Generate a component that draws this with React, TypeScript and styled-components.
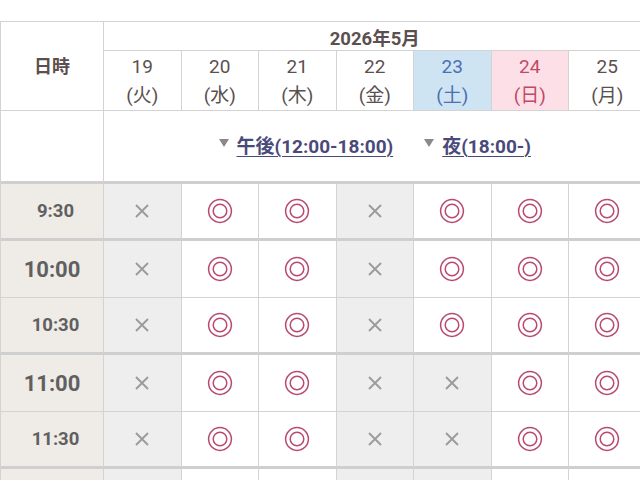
import React from 'react';
import styled, { createGlobalStyle } from 'styled-components';

const Global = createGlobalStyle`
  html, body { margin: 0; padding: 0; overflow: hidden; background: #fff; }
  body { font-family: Roboto, "Noto Sans CJK JP", sans-serif; }
`;

const BORDER = '#d3d3d3';

const Page = styled.div`
  padding-top: 21px;
  width: 640px;
  height: 480px;
  overflow: hidden;
`;

const Grid = styled.div`
  display: grid;
  grid-template-columns: 103px repeat(7, 77.5px);
  grid-template-rows: 29px 60px 73px repeat(6, 57px);
  width: max-content;
  border-top: 1px solid ${BORDER};
  border-left: 1px solid ${BORDER};
`;

const Cell = styled.div<{ $thick?: boolean }>`
  box-sizing: border-box;
  border-right: 1px solid ${BORDER};
  border-bottom: ${(p) => (p.$thick ? 3 : 1)}px solid ${(p) => (p.$thick ? '#cfcfcf' : BORDER)};
  display: flex;
  align-items: center;
  justify-content: center;
`;

const Corner = styled(Cell)`
  grid-row: span 2;
  font-size: 18px;
  font-weight: 700;
  color: #5b4f4f;
  padding-bottom: 2px;
`;

const Month = styled(Cell)`
  grid-column: span 7;
  font-size: 18.5px;
  font-weight: 700;
  color: #5b4f4f;
  padding-top: 1px;
`;

const DateCell = styled(Cell)<{ $kind?: 'sat' | 'sun' }>`
  flex-direction: column;
  font-size: 19px;
  line-height: 29px;
  background: ${(p) => (p.$kind === 'sat' ? '#cfe4f3' : p.$kind === 'sun' ? '#fde0e7' : '#fff')};
  color: ${(p) => (p.$kind === 'sat' ? '#4d6fb4' : p.$kind === 'sun' ? '#c04a66' : '#5b5050')};
`;

const Blank = styled(Cell)``;

const LinkBar = styled(Cell)`
  grid-column: span 7;
  gap: 31px;
  padding-bottom: 4px;
`;

const PeriodLink = styled.a`
  display: flex;
  align-items: center;
  gap: 8px;
  font-size: 19px;
  font-weight: 700;
  color: #4a4a7a;
  text-decoration: none;
`;

const LinkText = styled.span`
  text-decoration: underline;
  text-underline-offset: 3px;
  text-decoration-thickness: 1px;
`;

const Time = styled(Cell)<{ $major?: boolean }>`
  background: #efebe6;
  padding-left: ${(p) => (p.$major ? 0 : 7)}px;
  font-weight: 700;
  font-size: ${(p) => (p.$major ? 22 : 18.5)}px;
  color: #606060;
`;

const Slot = styled(Cell)<{ $ok: boolean }>`
  background: ${(p) => (p.$ok ? '#fff' : '#eeeeee')};
`;

const Tri = () => (
  <svg width="10" height="9" viewBox="0 0 10 9" style={{ marginTop: -2 }}>
    <polygon points="0,0 10,0 5,8" fill="#8e8787" />
  </svg>
);

const Maru = () => (
  <svg width="26" height="26" viewBox="0 0 26 26">
    <circle cx="13" cy="13" r="11.4" fill="none" stroke="#b9496e" strokeWidth="1.5" />
    <circle cx="13" cy="13" r="6.8" fill="none" stroke="#b9496e" strokeWidth="1.5" />
  </svg>
);

const Batsu = () => (
  <svg width="14" height="14" viewBox="0 0 14 14">
    <path d="M1 1 L13 13 M13 1 L1 13" stroke="#9b9b9b" strokeWidth="1.9" />
  </svg>
);

const dates: { d: number; w: string; kind?: 'sat' | 'sun' }[] = [
  { d: 19, w: '火' },
  { d: 20, w: '水' },
  { d: 21, w: '木' },
  { d: 22, w: '金' },
  { d: 23, w: '土', kind: 'sat' },
  { d: 24, w: '日', kind: 'sun' },
  { d: 25, w: '月' },
];

const rows = [
  { t: '9:30', major: false, thick: true, s: 'xooxooo' },
  { t: '10:00', major: true, thick: false, s: 'xooxooo' },
  { t: '10:30', major: false, thick: true, s: 'xooxooo' },
  { t: '11:00', major: true, thick: false, s: 'xooxxoo' },
  { t: '11:30', major: false, thick: true, s: 'xooxxoo' },
  { t: '', major: true, thick: false, s: 'xooxxoo' },
];

export default function App() {
  return (
    <>
      <Global />
      <Page>
        <Grid>
          <Corner>日時</Corner>
          <Month>2026年5月</Month>
          {dates.map((d) => (
            <DateCell key={d.d} $kind={d.kind}>
              <span>{d.d}</span>
              <span>({d.w})</span>
            </DateCell>
          ))}
          <Blank $thick />
          <LinkBar $thick>
            <PeriodLink href="#pm">
              <Tri />
              <LinkText>午後(12:00-18:00)</LinkText>
            </PeriodLink>
            <PeriodLink href="#night">
              <Tri />
              <LinkText>夜(18:00-)</LinkText>
            </PeriodLink>
          </LinkBar>
          {rows.map((r, ri) => (
            <React.Fragment key={ri}>
              <Time $major={r.major} $thick={r.thick}>{r.t}</Time>
              {r.s.split('').map((c, i) => (
                <Slot key={i} $ok={c === 'o'} $thick={r.thick}>
                  {c === 'o' ? <Maru /> : <Batsu />}
                </Slot>
              ))}
            </React.Fragment>
          ))}
        </Grid>
      </Page>
    </>
  );
}
